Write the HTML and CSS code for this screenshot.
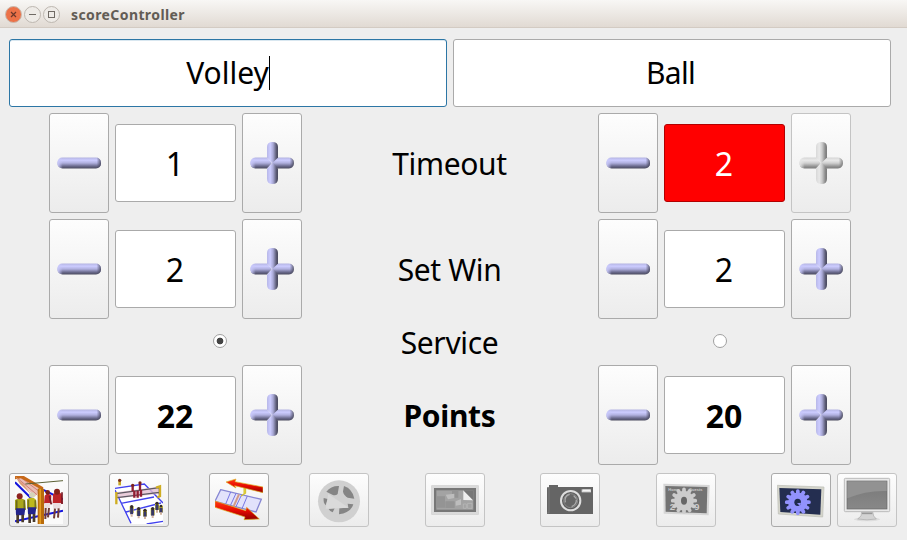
FILE: index.html
```html
<!DOCTYPE html>
<html lang="en">
<head>
<meta charset="utf-8">
<title>scoreController</title>
<link rel="stylesheet" href="styles.css">
</head>
<body>
<svg class="defs" width="0" height="0">
  <defs>
    <linearGradient id="bar-h" x1="0" y1="0" x2="0" y2="1"><stop offset="0" stop-color="#b4b4e2"/><stop offset=".25" stop-color="#ccccff"/><stop offset=".5" stop-color="#b0b0df"/><stop offset=".8" stop-color="#68688a"/><stop offset="1" stop-color="#4a4a5e"/></linearGradient>
    <linearGradient id="bar-v"><stop offset="0" stop-color="#b8b8e8"/><stop offset=".3" stop-color="#ccccff"/><stop offset=".55" stop-color="#a9a9d6"/><stop offset=".85" stop-color="#5a5a74"/><stop offset="1" stop-color="#4a4a5e"/></linearGradient>
    <linearGradient id="tip"><stop offset="0" stop-color="#c8c8fa"/><stop offset=".12" stop-color="#c8c8fa" stop-opacity="0"/><stop offset=".9" stop-color="#44445a" stop-opacity="0"/><stop offset="1" stop-color="#3c3c4e" stop-opacity=".8"/></linearGradient>
    <linearGradient id="red" x1="0" y1="0" x2="0" y2="1"><stop offset="0" stop-color="#ff3b16"/><stop offset=".5" stop-color="#e80b00"/><stop offset="1" stop-color="#8e0000"/></linearGradient>
    <linearGradient id="screen" x1="0" y1="0" x2="0" y2="1"><stop offset="0" stop-color="#787878"/><stop offset="1" stop-color="#888"/></linearGradient>
    <symbol id="minus" viewBox="0 0 44 44">
      <rect x=".5" y="16.500" width="43.500" height="11" rx="5" fill="url(#bar-h)"/>
      <rect x=".5" y="16.500" width="43.500" height="11" rx="5" fill="url(#tip)"/>
    </symbol>
    <symbol id="plus" viewBox="0 0 44 44">
      <path d="M5.500 16.500H17L22 22L17 27.500H5.500Q.5 27 .5 22T5.500 16.500Z" fill="url(#bar-h)"/>
      <path d="M39 16.500H27L22 22L27 27.500H39Q43.500 27 43.500 22T39 16.500Z" fill="url(#bar-h)"/>
      <rect x=".5" y="16.500" width="43.500" height="11" rx="5" fill="url(#tip)"/>
      <path d="M17 6Q17 1 22.500 1T28 6V16.500L22.500 22L17 16.500Z" fill="url(#bar-v)"/>
      <path d="M17 38Q17 43 22.500 43T28 38V27.500L22.500 22L17 27.500Z" fill="url(#bar-v)"/>
    </symbol>
    <symbol id="gear" viewBox="-40 -40 80 80">
      <circle r="29"/>
      <g stroke="currentColor" stroke-width="11" stroke-linecap="round"><path d="M0-33V33M-33 0H33M-28.500-16.500L28.500 16.500M-16.500-28.500L16.500 28.500M16.500-28.500L-16.500 28.500M28.500-16.500L-28.500 16.500"/></g>
    </symbol>
  </defs>
</svg>
<header class="titlebar">
  <svg class="controls" width="56" height="20" viewBox="0 0 56 20">
    <circle cx="9.500" cy="9.500" r="8" fill="#ec7248" stroke="#c9b9ae"/>
    <path d="M7 7l5 5m0-5l-5 5" stroke="#6c382a" stroke-width="1.200"/>
    <circle cx="28.500" cy="9.500" r="8" fill="#eeebe7" stroke="#bdb7b0"/>
    <path d="M25 9.500h7" stroke="#6f6a64"/>
    <circle cx="47.500" cy="9.500" r="8" fill="#eeebe7" stroke="#bdb7b0"/>
    <rect x="44.500" y="6.500" width="6" height="6" fill="none" stroke="#6f6a64"/>
  </svg>
  <span class="title">scoreController</span>
</header>
<main>
  <div class="teams">
    <div class="field team focused"><span class="name">Volley</span><i class="caret"></i></div>
    <div class="field team"><span class="name ball">Ball</span></div>
  </div>
  <div class="row">
    <div class="counter">
      <button class="btn step"><svg><use href="#minus"/></svg></button>
      <div class="field value">1</div>
      <button class="btn step"><svg><use href="#plus"/></svg></button>
    </div>
    <div class="label">Timeout</div>
    <div class="counter">
      <button class="btn step"><svg><use href="#minus"/></svg></button>
      <div class="field value alert">2</div>
      <button class="btn step off" disabled><svg><use href="#plus"/></svg></button>
    </div>
  </div>
  <div class="row">
    <div class="counter">
      <button class="btn step"><svg><use href="#minus"/></svg></button>
      <div class="field value">2</div>
      <button class="btn step"><svg><use href="#plus"/></svg></button>
    </div>
    <div class="label">Set Win</div>
    <div class="counter">
      <button class="btn step"><svg><use href="#minus"/></svg></button>
      <div class="field value">2</div>
      <button class="btn step"><svg><use href="#plus"/></svg></button>
    </div>
  </div>
  <div class="row service">
    <div class="pick left"><span class="radio on"></span></div>
    <div class="label">Service</div>
    <div class="pick right"><span class="radio"></span></div>
  </div>
  <div class="row points">
    <div class="counter">
      <button class="btn step"><svg><use href="#minus"/></svg></button>
      <div class="field value">22</div>
      <button class="btn step"><svg><use href="#plus"/></svg></button>
    </div>
    <div class="label">Points</div>
    <div class="counter">
      <button class="btn step"><svg><use href="#minus"/></svg></button>
      <div class="field value">20</div>
      <button class="btn step"><svg><use href="#plus"/></svg></button>
    </div>
  </div>
  <nav class="tools">
    <button class="btn tool">
      <svg viewBox="45 24 144 144">
        <rect x="45" y="24" width="144" height="144" fill="#fafafa"/>
        <path d="M45 43L101 98M91 47L189 94M45 160L189 128" stroke="#1515dc" stroke-width="6"/>
        <path d="M49 27L72 24L127 62L104 86Z" fill="#e9bcb5"/>
        <path d="M54 32L112 81M63 29L121 73" stroke="#d08078" stroke-width="3"/>
        <path d="M45 24H71L130 58L128 67L63 31L45 34Z" fill="#c76918"/>
        <path d="M45 24L60 48L95 80L70 48Z" fill="#dc9b79"/>
        <path d="M76 48L189 38" stroke="#5b6135" stroke-width="3"/>
        <path d="M45 96Q60 86 75 96L78 126H45Z" fill="#a9a61c"/><path d="M50 97V122M73 97V122" stroke="#6d6b1b" stroke-width="5"/><path d="M47 121H76L73 142H48Z" fill="#24248b"/><circle cx="59" cy="85" r="9" fill="#8d2220"/><path d="M53 140V166M68 140V163" stroke="#4a3a2c" stroke-width="8"/>
        <path d="M81 94Q96 82 108 95L111 122H81Z" fill="#bdb81d"/><path d="M85 95V119M106 97V119" stroke="#77731d" stroke-width="5"/><path d="M83 118H109L106 139H84Z" fill="#24248b"/><ellipse cx="96" cy="81" rx="9" ry="8" fill="#d5d4ba"/><path d="M89 138V165M102 138V162" stroke="#4a3a2c" stroke-width="8"/>
        <path d="M134 83Q143 72 154 82L153 107H132ZM159 79Q174 65 185 79L189 107H158Z" fill="#be2429"/>
        <path d="M133 105H151L149 121H132ZM158 105H185L180 123H160Z" fill="#ebdde0"/>
        <circle cx="143" cy="73" r="7" fill="#772019"/><circle cx="171" cy="71" r="9" fill="#852019"/>
        <path d="M137 120L136 153M147 120L144 148M165 122L162 151M176 121L174 149" stroke="#733c36" stroke-width="6"/>
        <path d="M148 84L154 109M186 73V108" stroke="#781b26" stroke-width="5"/>
        <path d="M113 63Q122 57 132 64V168H113Z" fill="#b96b0b"/><path d="M118 62H123V168H118Z" fill="#e39c20"/>
      </svg>
    </button>
    <button class="btn tool">
      <svg viewBox="45 24 144 144">
        <path d="M45 62L133 49L189 105V168H95Z" fill="#fff"/>
        <path d="M45 61L133 48L189 105M63 106L162 87M78 132L183 105M45 66L93 166M140 168L189 160" fill="none" stroke="#4040ee" stroke-width="4"/>
        <path d="M48 73L176 56V78L53 91Z" fill="#e4bfd1" opacity=".8"/>
        <path d="M48 77L178 59M51 89L178 73M178 56V80" fill="none" stroke="#5d5862" stroke-width="4"/>
        <path d="M49 72V109M168 59L180 55V84L172 88" fill="none" stroke="#cfad22" stroke-width="7"/>
        <path d="M98 55V70M120 49V66M103 68V89M113 68V89M123 66V86" stroke="#911e33" stroke-width="7"/>
        <path d="M59 38V52" stroke="#c9a724" stroke-width="8"/><circle cx="59" cy="37" r="5" fill="#7e3219"/>
        <circle cx="98" cy="52" r="5" fill="#79211b"/><circle cx="120" cy="45" r="5" fill="#79211b"/>
        <path d="M95 115V135M116 122V143M135 126V145M158 120V142M171 105V125M183 113V133" stroke="#c6ba35" stroke-width="12"/>
        <path d="M95 120V139M116 127V144M135 131V146M158 126V143M171 111V126M183 119V134" stroke="#373768" stroke-width="9"/>
        <path d="M95 139V146M116 144V151M135 146V153M158 143V150M171 126V134M183 133V140" stroke="#d3b5a0" stroke-width="6"/>
        <g fill="#352b2b"><circle cx="95" cy="116" r="5"/><circle cx="116" cy="122" r="5"/><circle cx="135" cy="127" r="5"/><circle cx="158" cy="122" r="5"/><circle cx="171" cy="106" r="5"/><circle cx="183" cy="114" r="4"/></g>
      </svg>
    </button>
    <button class="btn tool">
      <svg viewBox="45 24 144 144">
        <path d="M62 65L184 94L168 132L45 100Z" fill="#e2e2fb" stroke="#8787d3" stroke-width="4"/>
        <path d="M92 72L77 108M108 76L91 113M125 80L107 118M142 84L126 122" stroke="#7676e5" stroke-width="3"/>
        <path d="M117 79L100 117" stroke="#d39a88" stroke-width="6"/>
        <path d="M132 60V78L123 84L137 76V60" fill="#ecdd45" stroke="#d2bf2d" stroke-width="3"/>
        <path d="M78 42L108 33L105 41L189 57V74L104 53L108 60Z" fill="url(#red)" stroke="#dfb526" stroke-width="2"/>
        <path d="M45 99L137 128L140 118L178 153L132 155L135 147L45 118Z" fill="url(#red)" stroke="#dfb526" stroke-width="2"/>
      </svg>
    </button>
    <button class="btn tool off" disabled>
      <svg viewBox="45 24 144 144">
        <circle cx="117" cy="100" r="63" fill="#d0d0d0"/>
        <g fill="#858585">
          <path d="M79 71Q93 53 117 54L113 78Q106 85 97 80Z"/>
          <path d="M132 54Q157 62 163 92L143 89Q130 82 129 70Z"/>
          <path d="M71 90L83 93L77 112Q69 104 71 90Z"/>
          <path d="M86 123L104 121L98 133Q91 132 86 123Z"/>
          <path d="M118 121L145 119L143 107L160 109Q154 133 117 139Z"/>
        </g>
        <path d="M85 78L146 119L77 122Z" fill="#dadada"/>
      </svg>
    </button>
    <button class="btn tool gap off" disabled>
      <svg viewBox="48 24 144 144">
        <rect x="50" y="53" width="140" height="86" fill="#dadada" stroke="#cecece" stroke-width="2"/>
        <rect x="57" y="60" width="126" height="72" fill="#777"/>
        <rect x="64" y="67" width="111" height="58" fill="#a3a3a3"/>
        <path d="M66 85H90V119H66ZM91 100H119V120H91ZM111 67H130V89H111Z" fill="#949494"/>
        <path d="M92 80L118 77V90L99 94ZM122 100L138 93V110L122 113Z" fill="#bdbdbd"/>
        <path d="M145 67V96L174 97Z" fill="#efefef"/>
        <path d="M145 67H175V97Z" fill="#777"/>
        <path d="M145 108H154V121H145ZM158 106H171V121H158Z" fill="none" stroke="#bbb" stroke-width="2"/>
      </svg>
    </button>
    <button class="btn tool gap2 off" disabled>
      <svg viewBox="48 24 144 144">
        <path d="M51 58H57V51H84V57H189V138H51Z" fill="#656565"/>
        <path d="M57 59V135H51" fill="none" stroke="#858585" stroke-width="2"/>
        <rect x="155" y="64" width="28" height="9" fill="#ddd"/>
        <path d="M159 67H180" stroke="#f5f5f5" stroke-width="4"/>
        <circle cx="122" cy="98" r="29" fill="#5b5b5b" stroke="#dedede" stroke-width="6"/>
        <circle cx="122" cy="98" r="21" fill="#666" stroke="#888" stroke-width="3"/>
        <path d="M106 103Q102 83 119 79M125 116Q140 109 139 95M131 83L139 92" fill="none" stroke="#ababab" stroke-width="4"/>
      </svg>
    </button>
    <button class="btn tool gap off" disabled>
      <svg viewBox="51 24 144 144">
        <path d="M55 47L194 51L191 142L56 137Z" fill="#d6d6d6"/>
        <path d="M61 54L187 57L185 136L62 131Z" fill="#737373"/>
        <text class="mini" x="70" y="69">Home</text><text class="mini" x="132" y="70">Guests</text>
        <text class="score" x="74" y="127">2</text><text class="score" x="148" y="127">9</text>
        <g fill="#ccc" color="#ccc"><use href="#gear" x="76" y="57" width="82" height="82"/></g>
        <ellipse cx="117" cy="98" rx="9" ry="12" fill="#666"/>
      </svg>
    </button>
    <button class="btn tool gap2">
      <svg viewBox="36 24 144 144">
        <path d="M37 52L177 57L173 147L40 138Z" fill="#d5d5cb" stroke="#bbbcb5" stroke-width="2"/>
        <path d="M43 60L169 64L166 140L46 132Z" fill="#242e50"/>
        <g fill="#9292fc" color="#9292fc"><use href="#gear" x="58" y="62" width="81" height="81"/></g>
        <ellipse cx="98" cy="103" rx="10" ry="11" fill="#202b4c"/><path d="M96 106l12-2-3 10z" fill="#9292fc"/>
      </svg>
    </button>
    <button class="btn tool last off" disabled>
      <svg viewBox="234 24 144 144">
        <ellipse cx="306" cy="154" rx="39" ry="6" fill="#ddd"/>
        <path d="M290 131H323L326 144L334 153Q306 158 278 153L288 144Z" fill="#d3d3d3" stroke="#aaa" stroke-width="2"/>
        <path d="M291 136H322" stroke="#999" stroke-width="5"/>
        <rect x="238" y="31" width="136" height="100" rx="3" fill="#e9e9e9" stroke="#bbb" stroke-width="3"/>
        <rect x="246" y="39" width="120" height="84" fill="url(#screen)" stroke="#666" stroke-width="2"/>
        <path d="M247 40H365V69Q304 67 247 91Z" fill="#929292"/>
      </svg>
    </button>
  </nav>
</main>
</body>
</html>
```
FILE: styles.css
```css
* { box-sizing: border-box; }
body { margin: 0; width: 907px; height: 540px; overflow: hidden; background: #eee; color: #000; font-family: "Noto Sans", sans-serif; }
.defs { position: absolute; }
.titlebar { height: 28px; display: flex; align-items: center; padding-left: 4px; background: linear-gradient(#f8f7f5, #e1dad3); border-bottom: 1px solid #d3cbc3; }
.controls { display: block; margin-top: 2px; }
.title { margin: 2px 0 0 11px; font-size: 14px; line-height: 20px; font-weight: 700; letter-spacing: .4px; color: #625c55; }
main { padding: 11px 16px 0 9px; }
.teams { display: flex; gap: 6px; margin-bottom: 6px; }
.field { display: flex; align-items: center; justify-content: center; background: #fff; border: 1px solid #aaa; border-radius: 3px; }
.team { width: 438px; height: 68px; font-size: 30px; }
.name { padding-bottom: 1px; }
.ball { letter-spacing: -.7px; padding-right: 3px; }
.focused { border-color: #2c76a5; box-shadow: inset 0 1px #d9e7f0; }
.caret { width: 1px; height: 34px; background: #000; }
.row { display: grid; grid-template-columns: 253px 296px 253px; height: 100px; margin: 0 0 6px 40px; align-items: center; }
.counter { display: flex; gap: 6px; align-items: center; }
.btn { display: flex; align-items: center; justify-content: center; padding: 0; border: 1px solid #aaa; border-radius: 3px; background: linear-gradient(#fdfdfd, #ececec); }
.btn.off { border-color: #c4c4c4; }
.btn svg { display: block; flex: none; }
.step { width: 60px; height: 100px; }
.step svg { width: 44px; height: 44px; }
.step.off svg { filter: grayscale(1) brightness(1.1) opacity(.75); }
.value { width: 121px; height: 78px; font-size: 32px; padding: 1px 1px 0 0; }
.value.alert { background: #f00; border-color: #b20000; color: #fff; }
.label { font-size: 30px; line-height: 34px; letter-spacing: -.35px; text-align: center; padding: 1px 1px 0 0; }
.points { font-weight: 700; }
.service { height: 34px; grid-template-rows: 34px; }
.pick { display: flex; }
.pick.left { padding-left: 164px; }
.pick.right { padding-left: 115px; }
.radio { width: 14px; height: 14px; border: 1px solid #a0a0a0; border-radius: 50%; background: #fff; margin-bottom: 2px; }
.radio.on { background: radial-gradient(circle, #444 0 3px, #fff 3.700px); }
.tools { display: flex; margin-top: 8px; }
.tool { width: 60px; height: 54px; margin-right: 40px; flex: none; }
.tool svg { width: 48px; height: 48px; }
.gap { margin-left: 16px; }
.gap2 { margin-left: 15px; }
.tool:nth-child(8) { margin-right: 6px; }
.mini { font-size: 12px; font-weight: 700; fill: #ccc; }
.score { font-size: 28px; font-weight: 700; fill: #ccc; }
```
